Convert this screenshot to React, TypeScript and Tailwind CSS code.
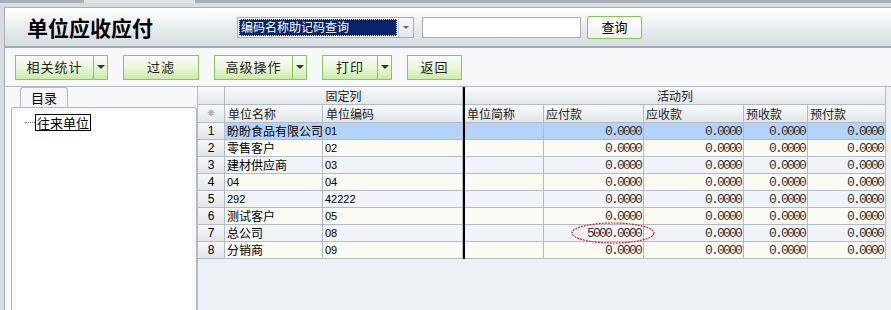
import React from "react";

const CJK = { fontFamily: '"Noto Sans CJK SC", "Noto Sans", sans-serif' };
const MONO = { fontFamily: '"Liberation Mono", monospace' };
const SANS = { fontFamily: '"Liberation Sans", Arial, sans-serif' };

const W = { idx: 28, name: 98, code: 141, bar: 2, abbr: 79, ap: 100, ar: 100, pr: 64, pp: 78 };

const rows = [
  { n: "盼盼食品有限公司", c: "01", ap: "0.0000" },
  { n: "零售客户", c: "02", ap: "0.0000" },
  { n: "建材供应商", c: "03", ap: "0.0000" },
  { n: "04", c: "04", ap: "0.0000", latin: true },
  { n: "292", c: "42222", ap: "0.0000", latin: true },
  { n: "测试客户", c: "05", ap: "0.0000" },
  { n: "总公司", c: "08", ap: "5000.0000" },
  { n: "分销商", c: "09", ap: "0.0000" },
];

function Btn({ label, w, arrow }: { label: string; w: number; arrow?: boolean }) {
  return (
    <div className="flex h-[25px]">
      <div
        className="flex items-center justify-center border border-[#86c95a] bg-gradient-to-b from-[#fbfdf6] via-[#eaf7dc] to-[#c9eca4] text-[13px] text-[#222] tracking-[1px]"
        style={{ ...CJK, width: w }}
      >
        {label}
      </div>
      {arrow && (
        <div className="flex w-[14px] items-center justify-center border border-l-0 border-[#86c95a] bg-gradient-to-b from-[#fbfdf6] via-[#eaf7dc] to-[#c9eca4]">
          <div className="h-0 w-0 border-l-[4px] border-r-[4px] border-t-[4px] border-l-transparent border-r-transparent border-t-[#333]" />
        </div>
      )}
    </div>
  );
}

function Cell({
  w,
  children,
  className = "",
  style = {},
}: {
  w: number;
  children?: React.ReactNode;
  className?: string;
  style?: React.CSSProperties;
}) {
  return (
    <div
      className={`flex shrink-0 items-center border-r border-b border-[#b3bcc6] overflow-hidden whitespace-nowrap ${className}`}
      style={{ width: w, ...style }}
    >
      {children}
    </div>
  );
}

export default function App() {
  return (
    <div className="relative flex h-[310px] w-[891px] flex-col overflow-hidden bg-[#d8dcdf]" style={CJK}>
      {/* top strip */}
      <div className="flex h-[3px] shrink-0">
        <div className="w-[84px] bg-[#a9b1b8]" />
        <div className="w-[111px] bg-[#e1e4e7]" />
        <div className="flex-1 bg-[#a9b1b8]" />
      </div>
      <div className="h-[4px] shrink-0 bg-[#d9dde0]" />

      <div className="ml-[4px] flex flex-1 flex-col border-l border-t border-[#a7aeb4] bg-[#f7f8f9]">
        {/* header */}
        <div className="flex h-[38px] shrink-0 items-center bg-gradient-to-b from-[#ffffff] to-[#d4dcdf] pl-[22px]">
          <div className="w-[210px] text-[21px] font-bold leading-none tracking-[0px] text-black">单位应收应付</div>
          <div className="flex h-[21px] w-[177px] border border-[#a5acb2] bg-white">
            <div className="m-[1px] flex flex-1 items-center border border-dotted border-[#e8d890] bg-[#0a246a] pl-[1px] text-[12px] leading-none text-white">
              编码名称助记码查询
            </div>
            <div className="flex w-[15px] items-center justify-center border-l border-[#c4c9ce] bg-gradient-to-b from-[#f8f9fa] to-[#e4e7ea]">
              <div className="h-0 w-0 border-l-[3px] border-r-[3px] border-t-[3px] border-l-transparent border-r-transparent border-t-[#666]" />
            </div>
          </div>
          <div className="ml-[8px] h-[21px] w-[159px] border border-[#a9b0b6] bg-white" />
          <div className="ml-[6px] flex h-[23px] w-[55px] items-center justify-center rounded-[2px] border border-[#80c955] bg-gradient-to-b from-[#ffffff] to-[#eef1ee] text-[13px] text-black">
            查询
          </div>
        </div>
        <div className="h-[2px] shrink-0 bg-[#a1a9af]" />

        {/* toolbar */}
        <div className="flex h-[39px] shrink-0 items-center border-b border-[#b2b8bd] pl-[10px]">
          <Btn label="相关统计" w={79} arrow />
          <div className="w-[15px]" />
          <Btn label="过滤" w={76} />
          <div className="w-[15px]" />
          <Btn label="高级操作" w={79} arrow />
          <div className="w-[15px]" />
          <Btn label="打印" w={56} arrow />
          <div className="w-[15px]" />
          <Btn label="返回" w={55} />
        </div>

        {/* main */}
        <div className="flex flex-1">
          {/* left panel */}
          <div className="flex w-[192px] shrink-0 flex-col pl-[6px]">
            <div className="flex h-[20px] shrink-0 pl-[9px]">
              <div className="flex w-[48px] items-center justify-center rounded-t-[3px] border border-b-0 border-[#b4bac0] bg-[#f5f6f7] text-[13px] text-black">
                目录
              </div>
            </div>
            <div className="flex-1 rounded-tl-[3px] rounded-tr-[3px] border border-b-0 border-[#b4bac0] bg-[#f6f7f8] px-[4px] pt-[3px]">
              <div className="h-full bg-white pl-[9px] pt-[3px]">
                <div className="flex items-center">
                  <div className="w-[10px] border-t border-dotted border-[#777]" />
                  <div className="border border-black px-[1px] text-[13px] leading-[15px] text-black">往来单位</div>
                </div>
              </div>
            </div>
          </div>

          {/* grid */}
          <div className="flex flex-1 flex-col bg-[#edf0f4] border-l border-[#b3bcc6] ml-[0px]">
            {/* header row 1 */}
            <div className="flex h-[18px] shrink-0">
              <Cell w={W.idx - 1} className="bg-gradient-to-b from-[#f8f9fa] to-[#e3e7ea]" />
              <Cell
                w={W.name + W.code - 1}
                className="justify-center bg-gradient-to-b from-[#f8f9fa] to-[#e3e7ea] text-[12px] text-[#222]"
              >
                固定列
              </Cell>
              <div className="w-[2px] shrink-0 bg-black" />
              <Cell
                w={W.abbr + W.ap + W.ar + W.pr + W.pp}
                className="justify-center bg-gradient-to-b from-[#f8f9fa] to-[#e3e7ea] text-[12px] text-[#222]"
              >
                活动列
              </Cell>
            </div>
            {/* header row 2 */}
            <div className="flex h-[18px] shrink-0">
              <Cell
                w={W.idx - 1}
                className="justify-center bg-gradient-to-b from-[#f8f9fa] to-[#e3e7ea] text-[9px] text-[#9aa0a6]"
                style={{ fontFamily: '"DejaVu Sans", sans-serif' }}
              >
                ❋
              </Cell>
              {[
                ["单位名称", W.name],
                ["单位编码", W.code - 1],
              ].map(([t, w]) => (
                <Cell
                  key={t as string}
                  w={w as number}
                  className="bg-gradient-to-b from-[#f8f9fa] to-[#e3e7ea] pl-[3px] text-[12px] text-[#222]"
                >
                  {t}
                </Cell>
              ))}
              <div className="w-[2px] shrink-0 bg-black" />
              {[
                ["单位简称", W.abbr],
                ["应付款", W.ap],
                ["应收款", W.ar],
                ["预收款", W.pr],
                ["预付款", W.pp],
              ].map(([t, w]) => (
                <Cell
                  key={t as string}
                  w={w as number}
                  className="bg-gradient-to-b from-[#f8f9fa] to-[#e3e7ea] pl-[2px] text-[12px] text-[#222]"
                >
                  {t}
                </Cell>
              ))}
            </div>
            {/* data rows */}
            {rows.map((r, i) => {
              const bg = i === 0 ? "bg-[#b5d3f9]" : i % 2 === 1 ? "bg-[#fbfbf3]" : "bg-[#f0f4fa]";
              const num = (v: string, w: number, extra?: React.ReactNode) => (
                <Cell
                  w={w}
                  className={`relative justify-end pr-[2px] text-[13px] leading-none tracking-[-1.8px] text-[#333] ${bg} ${extra ? "overflow-visible z-10" : ""}`}
                  style={MONO}
                >
                  {v}
                  {extra}
                </Cell>
              );
              return (
                <div key={i} className="flex h-[17px] shrink-0">
                  <Cell
                    w={W.idx - 1}
                    className="justify-center bg-gradient-to-b from-[#f6f7f8] to-[#e2e6e9] text-[12px] text-black"
                    style={SANS}
                  >
                    {i + 1}
                  </Cell>
                  <Cell
                    w={W.name}
                    className={`pl-[2px] ${r.latin ? "text-[11px]" : "text-[12px] leading-none"} text-black ${bg}`}
                    style={r.latin ? SANS : CJK}
                  >
                    {r.n}
                  </Cell>
                  <Cell w={W.code - 1} className={`pl-[2px] text-[11px] text-black ${bg}`} style={SANS}>
                    {r.c}
                  </Cell>
                  <div className="w-[2px] shrink-0 bg-black" />
                  <Cell w={W.abbr} className={bg} />
                  {num(
                    r.ap,
                    W.ap,
                    i === 6 ? (
                      <svg
                        className="pointer-events-none absolute left-[27px] top-[-3px]"
                        width="84"
                        height="22"
                        viewBox="0 0 84 22"
                      >
                        <ellipse
                          cx="42"
                          cy="11"
                          rx="41"
                          ry="10"
                          fill="none"
                          stroke="#e41b1b"
                          strokeWidth="1.2"
                          strokeDasharray="2 1"
                        />
                      </svg>
                    ) : undefined
                  )}
                  {num("0.0000", W.ar)}
                  {num("0.0000", W.pr)}
                  {num("0.0000", W.pp)}
                </div>
              );
            })}
          </div>
          <div className="w-[4px] shrink-0 bg-[#eef0f2]" />
        </div>
      </div>
    </div>
  );
}
